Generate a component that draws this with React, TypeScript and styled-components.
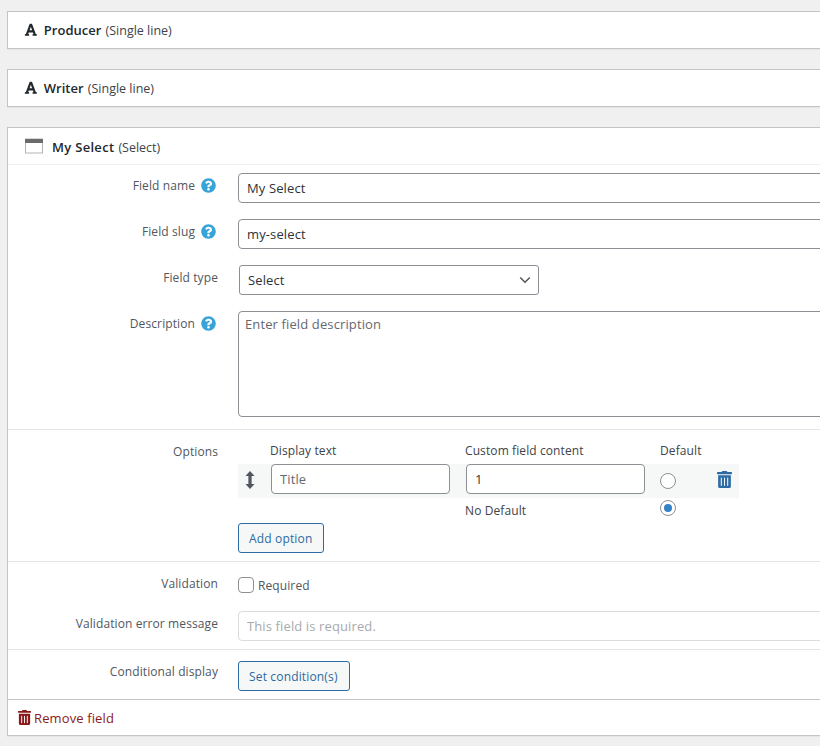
import React from "react";
import styled, { createGlobalStyle } from "styled-components";
import { FaFont, FaQuestionCircle, FaTrashAlt } from "react-icons/fa";

const Global = createGlobalStyle`
  html, body { margin: 0; padding: 0; background: #f0f0f1; }
  body { font-family: "Open Sans", "Noto Sans", sans-serif; font-size: 13px; color: #3c434a; }
`;

const Page = styled.div`
  width: 820px;
  height: 746px;
  overflow: hidden;
  padding: 11px 0 0 7px;
  box-sizing: border-box;
  display: flex;
  flex-direction: column;
  gap: 20px;
`;

const Card = styled.section`
  width: 900px;
  box-sizing: border-box;
  background: #fff;
  border: 1px solid #c3c4c7;
  box-shadow: 0 1px 1px rgba(0, 0, 0, 0.04);
  flex: none;
`;

const CardHeader = styled.header<{ $open?: boolean }>`
  height: 36px;
  display: flex;
  align-items: center;
  padding-left: 16px;
  gap: ${(p) => (p.$open ? 8 : 6)}px;
  border-bottom: ${(p) => (p.$open ? "1px solid #f0f0f1" : "none")};
`;

const HeaderText = styled.div<{ $open?: boolean }>`
  padding-top: ${(p) => (p.$open ? 1 : 0)}px;
`;

const FieldTitle = styled.strong<{ $wide?: boolean }>`
  font-size: 13px;
  font-weight: 600;
  color: #23282d;
  letter-spacing: ${(p) => (p.$wide ? 0.3 : 0.05)}px;
`;

const FieldKind = styled.span`
  font-size: 12.5px;
  font-weight: 400;
  color: #3c434a;
  margin-left: 4px;
`;

const Section = styled.div<{ $pt: number; $pb: number; $gap?: number; $border?: boolean }>`
  display: flex;
  flex-direction: column;
  gap: ${(p) => p.$gap ?? 16}px;
  padding: ${(p) => p.$pt}px 0 ${(p) => p.$pb}px;
  border-bottom: ${(p) => (p.$border ? "1px solid #e5e5e5" : "none")};
`;

const Row = styled.div`
  display: grid;
  grid-template-columns: 210px 1fr;
  column-gap: 20px;
  align-items: start;
`;

const Label = styled.label`
  display: flex;
  justify-content: flex-end;
  align-items: center;
  gap: 6px;
  height: 24px;
  color: #50575e;
  font-size: 12px;
  letter-spacing: 0.1px;
`;

const Help = styled(FaQuestionCircle)`
  color: #36a3d9;
  font-size: 15px;
  margin-right: 2px;
`;

const TextInput = styled.input<{ $muted?: boolean }>`
  display: block;
  box-sizing: border-box;
  width: 640px;
  height: 30px;
  padding: 0 8px;
  border: 1px solid ${(p) => (p.$muted ? "#dcdcde" : "#8c8f94")};
  border-radius: 4px;
  background: #fff;
  font: 13px "Open Sans", sans-serif;
  letter-spacing: 0.12px;
  color: #2c3338;
  outline: none;
  &::placeholder { color: ${(p) => (p.$muted ? "#a7aaad" : "#646970")}; opacity: 1; }
`;

const SelectBox = styled.div`
  box-sizing: border-box;
  width: 300px;
  height: 30px;
  margin-left: 1px;
  padding: 0 7px 0 8px;
  border: 1px solid #8c8f94;
  border-radius: 3px;
  display: flex;
  align-items: center;
  justify-content: space-between;
  font-size: 13px;
  letter-spacing: 0.12px;
  color: #2c3338;
`;

const TextArea = styled.textarea`
  display: block;
  box-sizing: border-box;
  width: 640px;
  height: 106px;
  padding: 3px 6px;
  border: 1px solid #8c8f94;
  border-radius: 4px;
  resize: none;
  font: 13px "Open Sans", sans-serif;
  letter-spacing: 0.12px;
  outline: none;
  &::placeholder { color: #646970; opacity: 1; }
`;

const OptionsHead = styled.div`
  display: grid;
  grid-template-columns: 195px 195px 1fr;
  padding: 2px 0 0 32px;
  height: 25px;
  line-height: 20px;
  width: 501px;
  box-sizing: border-box;
  font-size: 12px;
  letter-spacing: 0.1px;
  color: #3c434a;
`;

const OptionRow = styled.div`
  display: grid;
  grid-template-columns: 33px 179px 16px 179px 15px 16px 41px 15px;
  width: 501px;
  height: 34px;
  background: #f6f7f7;
  align-items: center;
  box-sizing: border-box;
`;

const DragHandle = styled.svg`
  justify-self: center;
  margin-top: -2px;
  margin-left: -9px;
`;

const CellInput = styled(TextInput)`
  width: 179px;
  margin-top: -4px;
`;

const Radio = styled.span<{ $on?: boolean }>`
  display: block;
  box-sizing: border-box;
  width: 16px;
  height: 16px;
  border: 1px solid #8c8f94;
  border-radius: 50%;
  background: #fff;
  &::after {
    content: "";
    display: ${(p) => (p.$on ? "block" : "none")};
    width: 8px;
    height: 8px;
    margin: 3px;
    border-radius: 50%;
    background: #3582c4;
  }
`;

const Trash = styled(FaTrashAlt)`
  color: #2f6ba3;
  font-size: 17px;
  margin: -4px 0 0 -1px;
`;

const NoDefaultRow = styled.div`
  display: grid;
  grid-template-columns: 227px 195px 16px;
  width: 501px;
  height: 25px;
  align-items: center;
  font-size: 12px;
  letter-spacing: 0.1px;
  color: #3c434a;
`;

const DefaultRadio = styled(Radio)`
  margin-top: -5px;
`;

const Button = styled.button<{ $top?: number }>`
  box-sizing: border-box;
  display: block;
  justify-self: start;
  height: 30px;
  margin-top: ${(p) => p.$top ?? 0}px;
  padding: 0 11px 0 10px;
  border: 1px solid #2f6ba3;
  border-radius: 3px;
  background: #f6f7f7;
  color: #2c6aa0;
  font: 12px "Open Sans", sans-serif;
  letter-spacing: 0.16px;
`;

const CheckLine = styled.label`
  display: flex;
  align-items: center;
  gap: 4px;
  height: 16px;
  margin-top: 6px;
  font-size: 12px;
  letter-spacing: 0.1px;
  color: #50575e;
`;

const CheckBox = styled.span`
  display: block;
  box-sizing: border-box;
  width: 16px;
  height: 16px;
  border: 1px solid #8c8f94;
  border-radius: 4px;
  background: #fff;
`;

const Footer = styled.footer`
  display: flex;
  align-items: center;
  gap: 2px;
  height: 35px;
  padding-left: 9px;
  border-top: 1px solid #c3c4c7;
  color: #8a1a1a;
  font-size: 13px;
  letter-spacing: 0.12px;
`;

const RemoveIcon = styled(FaTrashAlt)`
  color: #8a1a1a;
  font-size: 15px;
`;

const FontIcon = styled(FaFont)`
  color: #23282d;
  font-size: 13.7px;
`;

const SelectIcon = () => (
  <svg width="20" height="16" viewBox="0 0 20 16" aria-hidden="true">
    <rect x="1.5" y="1" width="17" height="14" fill="#fff" stroke="#b4b4b4" />
    <rect x="1" y="1" width="18" height="4" fill="#6b6b6b" />
  </svg>
);

const Chevron = () => (
  <svg width="12" height="8" viewBox="0 0 12 8" aria-hidden="true">
    <path d="M1.2 1.5 L6 6.2 L10.8 1.5" fill="none" stroke="#50575e" strokeWidth="1.5" />
  </svg>
);

export default function App() {
  return (
    <>
      <Global />
      <Page>
        <Card>
          <CardHeader>
            <FontIcon />
            <HeaderText>
              <FieldTitle>Producer</FieldTitle>
              <FieldKind>(Single line)</FieldKind>
            </HeaderText>
          </CardHeader>
        </Card>
        <Card>
          <CardHeader>
            <FontIcon />
            <HeaderText>
              <FieldTitle>Writer</FieldTitle>
              <FieldKind>(Single line)</FieldKind>
            </HeaderText>
          </CardHeader>
        </Card>
        <Card>
          <CardHeader $open>
            <SelectIcon />
            <HeaderText $open>
              <FieldTitle $wide>My Select</FieldTitle>
              <FieldKind>(Select)</FieldKind>
            </HeaderText>
          </CardHeader>
          <Section $pt={8} $pb={12} $border>
            <Row>
              <Label>Field name <Help /></Label>
              <TextInput defaultValue="My Select" />
            </Row>
            <Row>
              <Label>Field slug <Help /></Label>
              <TextInput defaultValue="my-select" />
            </Row>
            <Row>
              <Label>Field type</Label>
              <SelectBox>Select<Chevron /></SelectBox>
            </Row>
            <Row>
              <Label>Description <Help /></Label>
              <TextArea placeholder="Enter field description" />
            </Row>
          </Section>
          <Section $pt={9} $pb={8} $gap={0} $border>
            <Row>
              <Label>Options</Label>
              <div>
                <OptionsHead>
                  <span>Display text</span>
                  <span>Custom field content</span>
                  <span>Default</span>
                </OptionsHead>
                <OptionRow>
                  <DragHandle width="10" height="18" viewBox="0 0 10 18" aria-hidden="true">
                    <path d="M5 0 L9.5 5 H6.6 V13 H9.5 L5 18 L0.5 13 H3.4 V5 H0.5 Z" fill="#50575e" />
                  </DragHandle>
                  <CellInput placeholder="Title" />
                  <span />
                  <CellInput defaultValue="1" />
                  <span />
                  <Radio />
                  <span />
                  <Trash />
                </OptionRow>
                <NoDefaultRow>
                  <span />
                  <span>No Default</span>
                  <DefaultRadio $on />
                </NoDefaultRow>
                <Button>Add option</Button>
              </div>
            </Row>
          </Section>
          <Section $pt={9} $pb={8} $border>
            <Row>
              <Label>Validation</Label>
              <CheckLine><CheckBox />Required</CheckLine>
            </Row>
            <Row>
              <Label>Validation error message</Label>
              <TextInput $muted placeholder="This field is required." />
            </Row>
          </Section>
          <Section $pt={9} $pb={8}>
            <Row>
              <Label>Conditional display</Label>
              <Button $top={2}>Set condition(s)</Button>
            </Row>
          </Section>
          <Footer>
            <RemoveIcon />
            Remove field
          </Footer>
        </Card>
      </Page>
    </>
  );
}
